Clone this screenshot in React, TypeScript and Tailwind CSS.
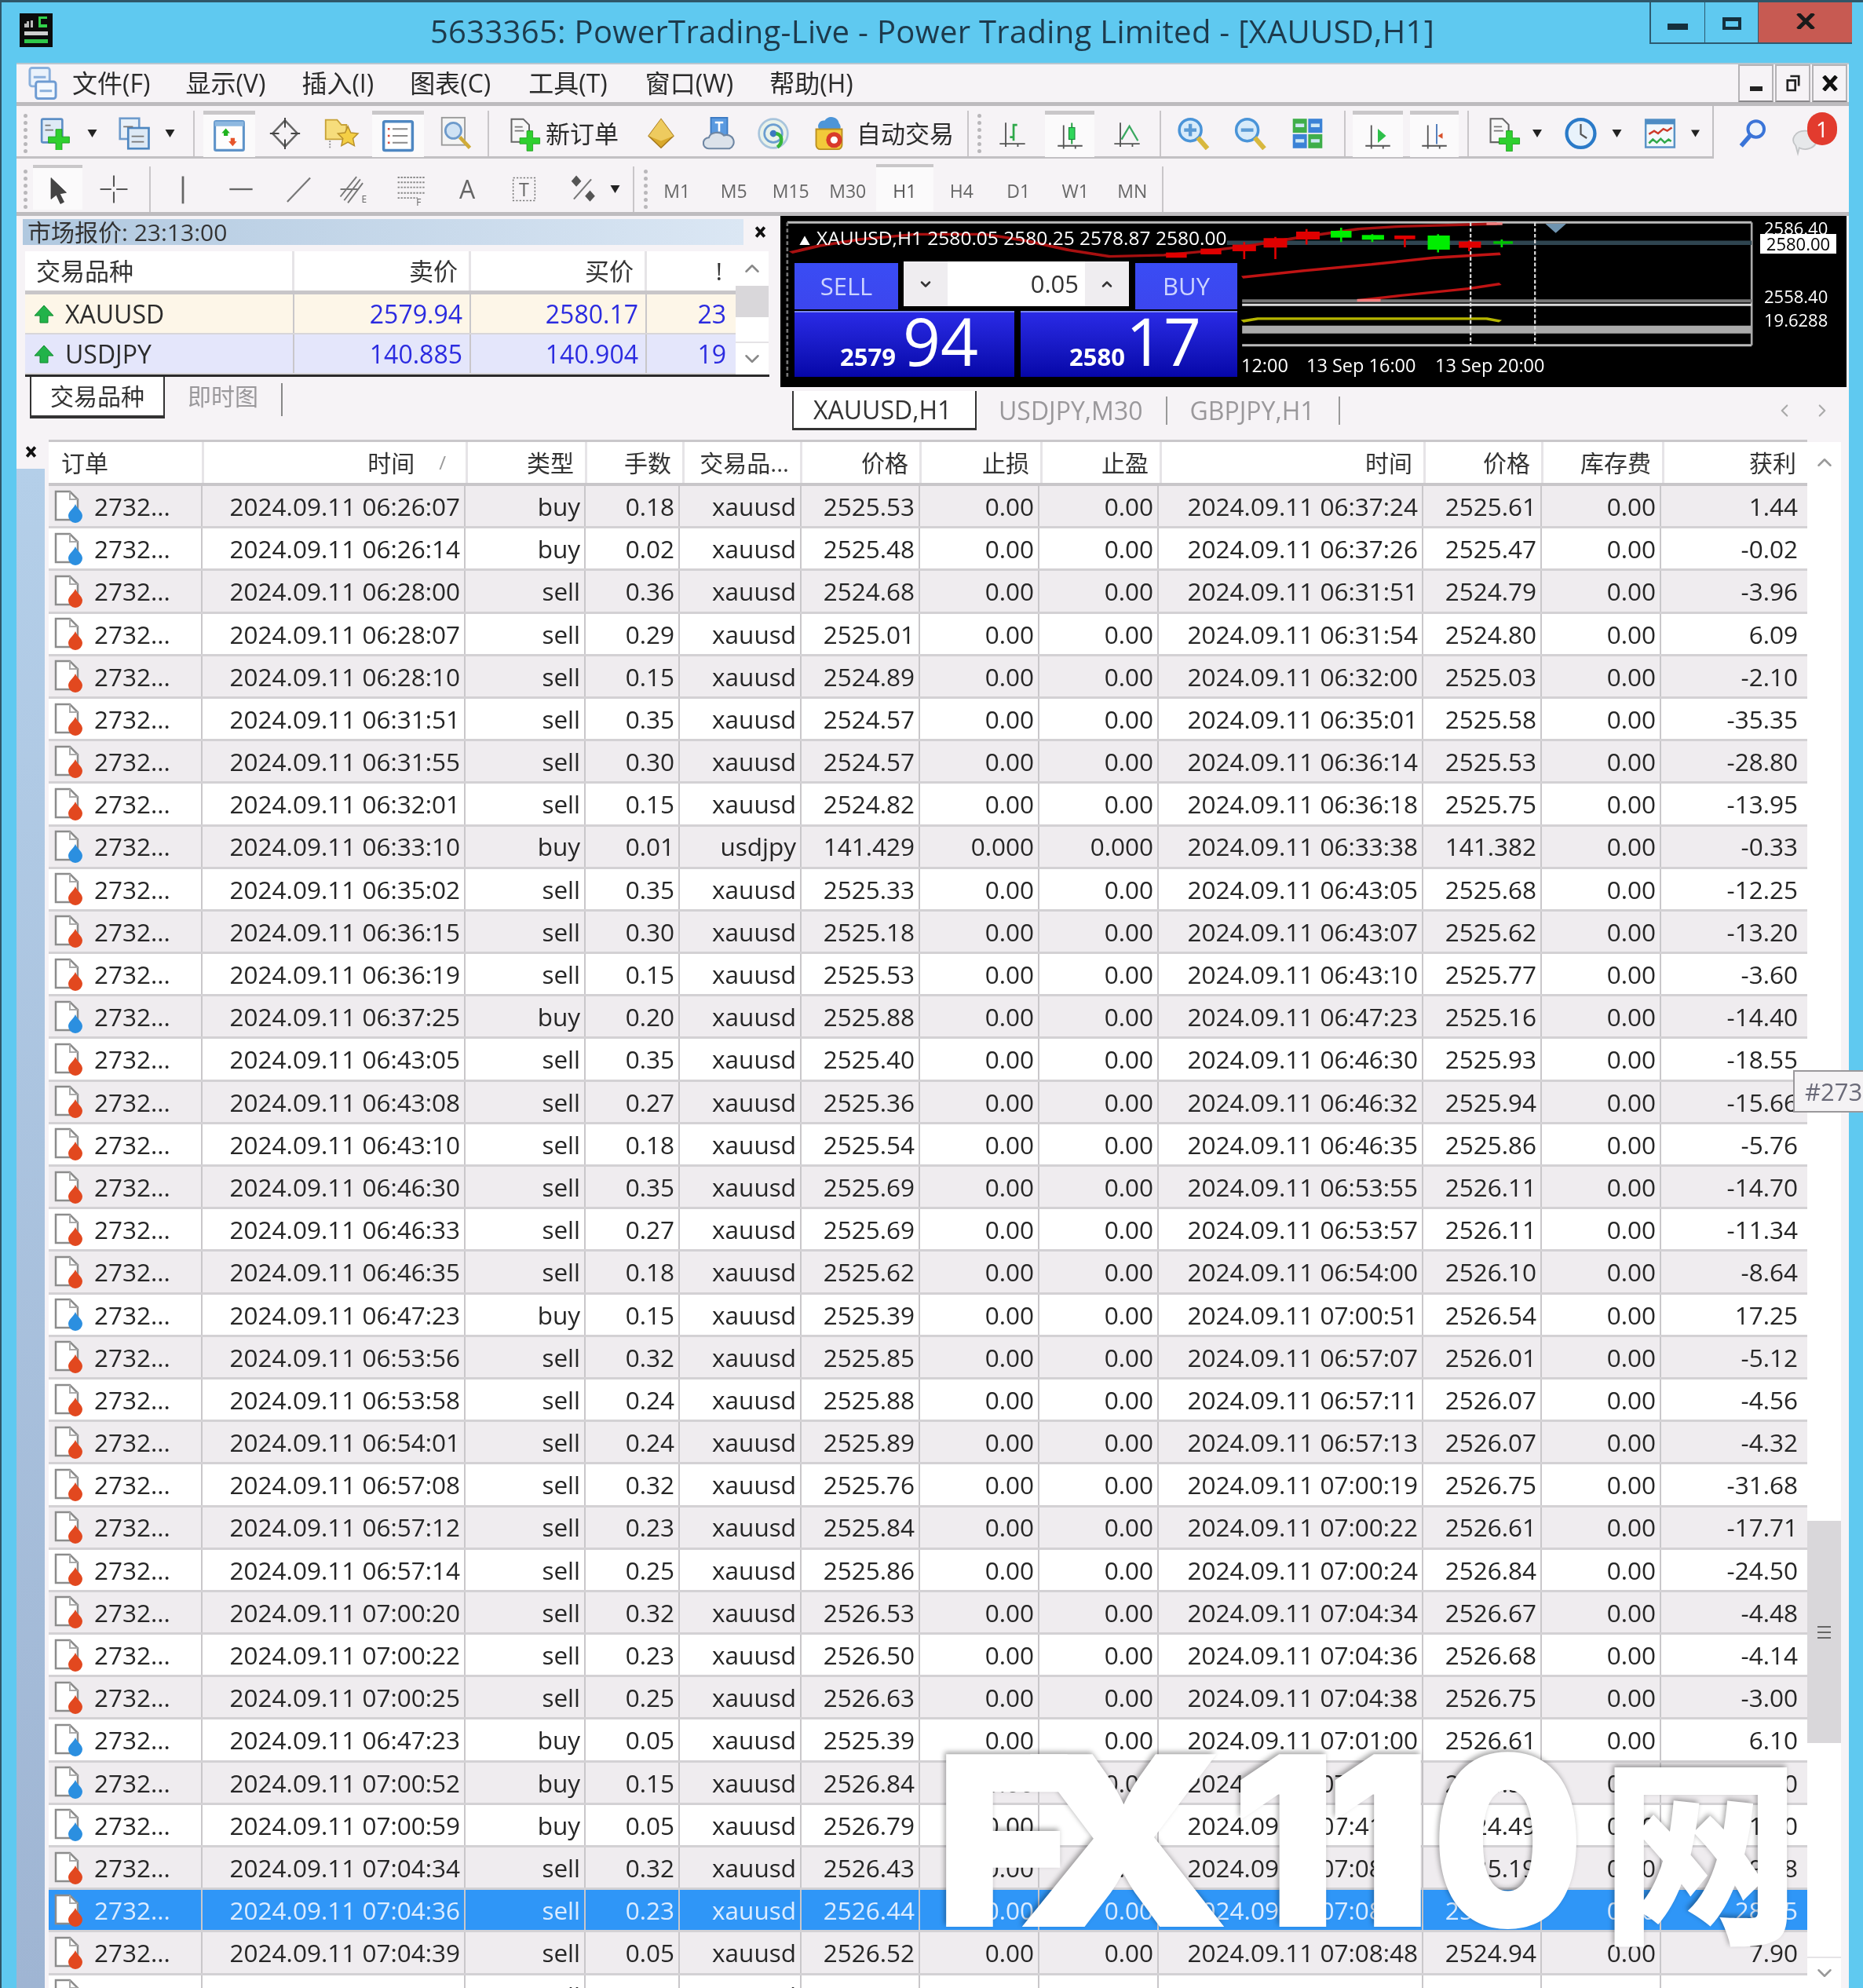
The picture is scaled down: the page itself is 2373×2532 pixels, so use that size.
import React from "react";
import { ChevronUp, ChevronDown, ChevronLeft, ChevronRight } from "lucide-react";

type P = { className?: string };
const Svg = ({ className, children }: P & { children: React.ReactNode }) => (
  <svg viewBox="0 0 48 48" className={"shrink-0 " + (className ?? "")}>{children}</svg>
);
const GreenPlus = ({ x = 26, y = 24, s = 7 }: { x?: number; y?: number; s?: number }) => (
  <path
    d={`M${x - s / 2} ${y}h${s}v${s * 1.2}h${s * 1.2}v${s}h${-s * 1.2}v${s * 1.2}h${-s}v${-s * 1.2}h${-s * 1.2}v${-s}h${s * 1.2}z`}
    fill="#2fd02f"
    stroke="#1a9a1a"
    strokeWidth="1"
  />
);
const Axes = () => (
  <g stroke="#555" strokeWidth="2.4" fill="none">
    <path d="M3 41H45M13 6V46M33 41v5" />
  </g>
);
const NewChart = (p: P) => (
  <Svg {...p}>
    <rect x="3" y="3" width="30" height="34" rx="2" fill="#dfeaf6" stroke="#5e8fc6" strokeWidth="3" />
    <path d="M8 12h8M8 19h12" stroke="#777" strokeWidth="2" />
    <GreenPlus x={28} y={18} s={9} />
  </Svg>
);
const Profiles = (p: P) => (
  <Svg {...p}>
    <rect x="2" y="2" width="28" height="30" fill="#e8f0f8" stroke="#6e9bcc" strokeWidth="3" />
    <rect x="14" y="16" width="30" height="30" fill="#dde9f5" stroke="#4d86c0" strokeWidth="3" />
    <path d="M7 14h14M19 28h18M19 36h18" stroke="#777" strokeWidth="2" />
  </Svg>
);
const Market = (p: P) => (
  <Svg {...p}>
    <rect x="3" y="3" width="42" height="42" rx="2" fill="#fdfdfd" stroke="#5e93c9" strokeWidth="3.5" />
    <rect x="3" y="3" width="42" height="7" fill="#8db8e0" />
    <path d="M19 13l6 7h-3v4h-6v-4h-3z" fill="#1fb31f" />
    <path d="M29 39l-6-7h3v-5h6v5h3z" fill="#e6552a" />
  </Svg>
);
const Crosshair = (p: P) => (
  <Svg {...p}>
    <path d="M24 4L43 24L24 44L5 24Z" fill="none" stroke="#666" strokeWidth="3" />
    <path d="M24 0V15M24 33V48M1 24H15M33 24H47" stroke="#444" strokeWidth="2.4" />
  </Svg>
);
const FolderStar = (p: P) => (
  <Svg {...p}>
    <path d="M3 5h16l6 7h7v20H3z" fill="#f6dd7c" stroke="#c7a238" strokeWidth="2" />
    <path d="M34 14l4 9 10 1-7 7 2 10-9-5-9 5 2-10-7-7 10-1z" fill="#f4cf45" stroke="#b8902a" strokeWidth="1.6" />
    <path d="M9 34v12" stroke="#888" strokeWidth="2" strokeDasharray="2 2" />
  </Svg>
);
const Navigator = (p: P) => (
  <Svg {...p}>
    <rect x="3" y="3" width="42" height="42" rx="2" fill="#fff" stroke="#4e87c2" strokeWidth="4" />
    <path d="M16 14h22M16 24h22M16 34h22" stroke="#8a8a8a" strokeWidth="2.4" />
    <path d="M9 14h3M9 24h3M9 34h3" stroke="#d84a3a" strokeWidth="3" />
  </Svg>
);
const Tester = (p: P) => (
  <Svg {...p}>
    <rect x="3" y="2" width="32" height="38" fill="#f4f4f4" stroke="#999" strokeWidth="2" />
    <circle cx="19" cy="20" r="11" fill="#cfe2f4" stroke="#6d9acb" strokeWidth="3" />
    <path d="M28 29l14 15" stroke="#d0ab38" strokeWidth="5" />
  </Svg>
);
const OrderDoc = (p: P) => (
  <Svg {...p}>
    <path d="M3 2h18l9 9v26H3z" fill="#f7f7f7" stroke="#666" strokeWidth="2.4" />
    <path d="M8 14h12M8 20h14" stroke="#777" strokeWidth="2" />
    <GreenPlus x={31} y={20} s={9} />
  </Svg>
);
const Gold = (p: P) => (
  <Svg {...p}>
    <path d="M24 1L44 28L24 47L4 28Z" fill="#d9a92c" stroke="#a87a1c" strokeWidth="2" />
    <path d="M24 1L4 28L24 36L44 28Z" fill="#eecb5f" />
  </Svg>
);
const CloudDoc = (p: P) => (
  <Svg {...p}>
    <rect x="12" y="1" width="24" height="28" fill="#5a9ae0" stroke="#3a78c0" strokeWidth="2" />
    <path d="M18 8h12M24 8v13" stroke="#fff" strokeWidth="3" />
    <path d="M9 46a8 8 0 0 1 0-16a12 9 0 0 1 22-3a9 9 0 0 1 8 19z" fill="#dbe2ea" stroke="#6e86a3" strokeWidth="2.4" />
  </Svg>
);
const Signal = (p: P) => (
  <Svg {...p}>
    <circle cx="24" cy="24" r="21" fill="#e9f2ea" stroke="#a8c4dc" strokeWidth="3" />
    <circle cx="24" cy="24" r="13" fill="none" stroke="#6b9ed0" strokeWidth="3" />
    <circle cx="24" cy="24" r="5" fill="#3c78c0" />
    <path d="M28 24C38 26 38 38 30 44" fill="none" stroke="#35b53a" strokeWidth="5" />
  </Svg>
);
const Auto = (p: P) => (
  <Svg {...p}>
    <path d="M10 18a8 8 0 0 1 8-12a11 11 0 0 1 20 4a7 7 0 0 1 0 10z" fill="#4d95d8" />
    <path d="M6 18h36v22a6 6 0 0 1-6 6H12a6 6 0 0 1-6-6z" fill="#f2c93a" stroke="#b98e20" strokeWidth="2" />
    <circle cx="31" cy="33" r="11" fill="#d93a2a" />
    <circle cx="31" cy="33" r="5" fill="#fff" />
  </Svg>
);
const Bars = (p: P) => (
  <Svg {...p}>
    <Axes />
    <path d="M26 8V36M26 10h6M20 30h6" stroke="#2fa84a" strokeWidth="3.5" fill="none" />
  </Svg>
);
const Candle = (p: P) => (
  <Svg {...p}>
    <Axes />
    <path d="M27 2V38" stroke="#1a9a3a" strokeWidth="2.5" />
    <rect x="22" y="10" width="10" height="20" fill="#2fd65a" stroke="#1a8a3a" strokeWidth="1.5" />
  </Svg>
);
const LineC = (p: P) => (
  <Svg {...p}>
    <Axes />
    <path d="M15 34L28 12L42 36" stroke="#3aa860" strokeWidth="3" fill="none" />
  </Svg>
);
const Zoom = ({ className, plus }: P & { plus?: boolean }) => (
  <Svg className={className}>
    <circle cx="19" cy="19" r="16" fill="#d7ebfa" stroke="#4a94d8" strokeWidth="4" />
    <path d="M10 19h18" stroke="#5b9bd5" strokeWidth="5" />
    {plus && <path d="M19 10v18" stroke="#5b9bd5" strokeWidth="5" />}
    <path d="M30 30l14 16" stroke="#d8b83e" strokeWidth="7" />
  </Svg>
);
const Tile = (p: P) => (
  <Svg {...p}>
    <rect x="2" y="2" width="21" height="21" fill="#3fae4a" />
    <rect x="25" y="2" width="21" height="21" fill="#3b82d6" />
    <rect x="2" y="25" width="21" height="21" fill="#3b82d6" />
    <rect x="25" y="25" width="21" height="21" fill="#3fae4a" />
    <path d="M6 12h13M29 12h13M6 35h13M29 35h13" stroke="#cfe8f5" strokeWidth="5" />
  </Svg>
);
const ScrollC = (p: P) => (
  <Svg {...p}>
    <Axes />
    <path d="M24 12L38 24L24 36Z" fill="#2ec04a" />
  </Svg>
);
const ShiftC = (p: P) => (
  <Svg {...p}>
    <Axes />
    <path d="M28 4V38" stroke="#4a78b8" strokeWidth="2.5" />
    <path d="M30 24l8-5v10z" fill="#d8502a" />
  </Svg>
);
const Clock = (p: P) => (
  <Svg {...p}>
    <circle cx="24" cy="24" r="21" fill="#e8f2fb" stroke="#2a7ac8" strokeWidth="5" />
    <path d="M24 10V25L33 31" stroke="#555" strokeWidth="2.6" fill="none" />
  </Svg>
);
const ChartWin = (p: P) => (
  <Svg {...p}>
    <rect x="2" y="3" width="44" height="42" fill="#f3f8fc" stroke="#5a93c6" strokeWidth="3" />
    <rect x="2" y="3" width="44" height="7" fill="#4d8cc4" />
    <path d="M7 25l8-5 6 4 8-7 6 3 7-5" stroke="#cc3a2a" strokeWidth="3" fill="none" />
    <path d="M7 39l6-6 6 5 6-6 6 6 6-5 4 3" stroke="#2fa84a" strokeWidth="3" fill="none" />
  </Svg>
);
const Search = (p: P) => (
  <Svg {...p}>
    <circle cx="30" cy="17" r="13" fill="#eef4fb" stroke="#3a74d8" strokeWidth="5" />
    <path d="M20 28L6 44" stroke="#3a74d8" strokeWidth="7" />
  </Svg>
);
const Arrow = (p: P) => (
  <Svg {...p}>
    <path d="M12 2V38L21 31L28 46L34 43L27 29L38 27Z" fill="#444" stroke="#333" strokeWidth="1" />
  </Svg>
);
const Cross = (p: P) => (
  <Svg {...p}>
    <path d="M24 2V20M24 28V46M2 24H20M28 24H46" stroke="#555" strokeWidth="2.6" />
  </Svg>
);
const VLine = (p: P) => (
  <Svg {...p}>
    <path d="M24 6V44" stroke="#666" strokeWidth="3" />
  </Svg>
);
const HLine = (p: P) => (
  <Svg {...p}>
    <path d="M2 24H46" stroke="#666" strokeWidth="3.5" />
  </Svg>
);
const Trend = (p: P) => (
  <Svg {...p}>
    <path d="M4 46L44 4" stroke="#777" strokeWidth="3" />
  </Svg>
);
const FibChan = (p: P) => (
  <Svg {...p}>
    <path d="M2 36L28 4M8 42L34 8M14 46L38 14M2 24L30 24" stroke="#777" strokeWidth="2.4" />
    <text x="36" y="46" fontSize="15" fill="#666" fontFamily="Open Sans">E</text>
  </Svg>
);
const FibLines = (p: P) => (
  <Svg {...p}>
    <path d="M2 5H46M2 13H46M2 21H46M2 30H46M2 38H34" stroke="#888" strokeWidth="2.4" strokeDasharray="3 2" />
    <text x="32" y="50" fontSize="15" fill="#666" fontFamily="Open Sans">F</text>
  </Svg>
);
const TBox = (p: P) => (
  <Svg {...p}>
    <rect x="5" y="4" width="38" height="40" fill="none" stroke="#777" strokeWidth="2" strokeDasharray="3 3" />
    <text x="24" y="36" textAnchor="middle" fontSize="32" fill="#666" fontFamily="Open Sans">T</text>
  </Svg>
);
const Shapes = (p: P) => (
  <Svg {...p}>
    <path d="M14 2l8 9-8 9-8-9zM36 26l8 9-8 9-8-9z" fill="#555" />
    <path d="M10 40L38 8" stroke="#777" strokeWidth="2.6" />
  </Svg>
);
const Dd = ({ className }: P) => (
  <svg viewBox="0 0 12 10" className={"h-[10px] shrink-0 " + (className ?? "")}>
    <path d="M0 0H12L6 10Z" fill="#222" />
  </svg>
);
const Sep = ({ className }: P) => <div className={"w-[2px] h-[58px] shrink-0 bg-[#c9c6c9] " + (className ?? "")} />;
const Grip = ({ className }: P) => (
  <div className={"w-[5px] h-[50px] shrink-0 border-l-[5px] border-dotted border-[#b9b7ba] " + (className ?? "")} />
);
const Active = ({ className, children }: P & { children: React.ReactNode }) => (
  <div className={"h-[59px] shrink-0 flex items-center justify-center bg-[#fbfafb] border-t-[5px] border-[#c9c7c9] " + (className ?? "")}>
    {children}
  </div>
);

const TitleBar = () => (
  <div className="relative h-[77px] shrink-0 flex items-start justify-center pt-[12px]">
    <svg viewBox="0 0 42 43" className="absolute left-[23px] top-[14px] w-[42px] h-[43px]">
      <rect width="42" height="43" fill="#0b0b0b" />
      <path d="M6 18V13h3v-3h3v8zM14 18V9h3v9z" fill="#bbb" />
      <path d="M24 4h11v3h-8v7h8v4H24z" fill="#32d24a" />
      <rect x="6" y="23" width="30" height="5" fill="#cfcfcf" />
      <rect x="6" y="33" width="30" height="5" fill="#2fc84a" />
    </svg>
    <span className="text-[40px] leading-[50px] text-[#1d3a4c] tracking-[0.3px]">
      5633365: PowerTrading-Live - Power Trading Limited - [XAUUSD,H1]
    </span>
    <div className="absolute right-[14px] top-0 flex h-[53px] border-b-[2px] border-[#2d5a70]">
      <div className="w-[71px] border-l-[2px] border-r-[1px] border-[#2d5a70] flex items-start justify-center pt-[27px]">
        <div className="w-[26px] h-[8px] bg-[#15303d]" />
      </div>
      <div className="w-[68px] border-r-[1px] border-[#2d5a70] flex items-start justify-center pt-[19px]">
        <div className="w-[24px] h-[16px] border-[4px] border-t-[5px] border-[#15303d]" />
      </div>
      <div className="w-[119px] bg-[#c75a52] flex items-start justify-center pt-[14px]">
        <svg viewBox="0 0 24 20" className="w-[24px] h-[20px]">
          <path d="M2 0L22 20M22 0L2 20" stroke="#1a1a1a" strokeWidth="5" />
        </svg>
      </div>
    </div>
  </div>
);

const menus = [
  ["文件(F)", "ml-[19px]"],
  ["显示(V)", "ml-[45px]"],
  ["插入(I)", "ml-[46px]"],
  ["图表(C)", "ml-[46px]"],
  ["工具(T)", "ml-[48px]"],
  ["窗口(W)", "ml-[48px]"],
  ["帮助(H)", "ml-[46px]"],
];

const MdiBtn = ({ children }: { children: React.ReactNode }) => (
  <div className="w-[45px] h-[48px] border-[2px] border-[#b5b3b6] border-b-[#8a888b] flex items-center justify-center text-[#222]">
    {children}
  </div>
);

const MenuBar = () => (
  <div className="relative h-[55px] shrink-0 border-t-[2px] border-b-[5px] border-t-[#b9c6cf] border-b-[#bdbbbe] flex items-center pl-[13px]">
    <svg viewBox="0 0 40 44" className="w-[39px] h-[44px] shrink-0">
      <rect x="4" y="2" width="26" height="24" rx="3" fill="#eaf2fb" stroke="#8ab0dc" strokeWidth="3" />
      <rect x="12" y="20" width="26" height="22" rx="3" fill="#f4f8fd" stroke="#6e9bd2" strokeWidth="3" />
      <path d="M9 14h16M17 32h16" stroke="#8ab0dc" strokeWidth="3" />
    </svg>
    {menus.map(([t, c]) => (
      <span key={t} className={"text-[32px] leading-[40px] text-[#2b2b2b] " + c}>
        {t}
      </span>
    ))}
    <div className="absolute right-[2px] top-0 flex gap-[2px]">
      <MdiBtn>
        <div className="w-[16px] h-[6px] bg-[#222] mt-[14px]" />
      </MdiBtn>
      <MdiBtn>
        <svg viewBox="0 0 20 24" className="w-[18px] h-[24px]">
          <path d="M6 2H18V16M2 8H13V22H2Z" fill="none" stroke="#222" strokeWidth="3" />
        </svg>
      </MdiBtn>
      <MdiBtn>
        <svg viewBox="0 0 20 20" className="w-[20px] h-[20px]">
          <path d="M2 1L18 19M18 1L2 19" stroke="#111" strokeWidth="5" />
        </svg>
      </MdiBtn>
    </div>
  </div>
);

const Toolbar1 = () => (
  <div className="h-[69px] shrink-0 flex items-start">
    <div className="w-[2162px] h-[67px] shrink-0 pt-[6px] flex items-center border-b-[3px] border-r-[2px] border-[#c2c0c3]">
      <Grip className="ml-[9px]" />
      <NewChart className="ml-[12px] w-[49px] h-[42px]" />
      <Dd className="ml-[15px] w-[13px]" />
      <Profiles className="ml-[25px] w-[46px] h-[42px]" />
      <Dd className="ml-[15px] w-[13px]" />
      <Sep className="ml-[23px]" />
      <Active className="ml-[11px] w-[66px]">
        <Market className="w-[42px] h-[42px]" />
      </Active>
      <Crosshair className="ml-[18px] w-[40px] h-[42px]" />
      <FolderStar className="ml-[26px] w-[50px] h-[44px]" />
      <Active className="ml-[15px] w-[66px]">
        <Navigator className="w-[42px] h-[42px]" />
      </Active>
      <Tester className="ml-[19px] w-[46px] h-[44px]" />
      <Sep className="ml-[16px]" />
      <OrderDoc className="ml-[26px] w-[40px] h-[46px]" />
      <span className="ml-[6px] w-[95px] text-[31px] leading-[40px] text-[#2b2b2b] whitespace-nowrap">新订单</span>
      <Gold className="ml-[33px] w-[38px] h-[40px]" />
      <CloudDoc className="ml-[34px] w-[42px] h-[44px]" />
      <Signal className="ml-[27px] w-[42px] h-[44px]" />
      <Auto className="ml-[27px] w-[46px] h-[44px]" />
      <span className="ml-[12px] w-[121px] text-[31px] leading-[40px] text-[#2b2b2b] whitespace-nowrap">自动交易</span>
      <Sep className="ml-[20px]" />
      <Grip className="ml-[11px]" />
      <Bars className="ml-[21px] w-[37px] h-[42px]" />
      <Active className="ml-[23px] w-[63px]">
        <Candle className="w-[36px] h-[44px]" />
      </Active>
      <LineC className="ml-[23px] w-[37px] h-[42px]" />
      <Sep className="ml-[23px]" />
      <Zoom plus className="ml-[20px] w-[43px] h-[42px]" />
      <Zoom className="ml-[30px] w-[42px] h-[42px]" />
      <Tile className="ml-[31px] w-[41px] h-[42px]" />
      <Sep className="ml-[26px]" />
      <Active className="ml-[9px] w-[64px]">
        <ScrollC className="w-[36px] h-[42px]" />
      </Active>
      <Active className="ml-[9px] w-[62px]">
        <ShiftC className="w-[36px] h-[42px]" />
      </Active>
      <Sep className="ml-[11px]" />
      <OrderDoc className="ml-[25px] w-[41px] h-[46px]" />
      <Dd className="ml-[15px] w-[12px]" />
      <Clock className="ml-[29px] w-[41px] h-[42px]" />
      <Dd className="ml-[19px] w-[13px]" />
      <ChartWin className="ml-[28px] w-[41px] h-[40px]" />
      <Dd className="ml-[19px] w-[11px]" />
    </div>
    <Search className="ml-[30px] mt-[15px] w-[38px] h-[40px]" />
    <div className="relative ml-[30px] mt-[8px] w-[59px] h-[56px] shrink-0">
      <svg viewBox="0 0 40 40" className="absolute left-0 bottom-0 w-[36px] h-[36px]">
        <path d="M20 4a16 13 0 1 1-8 24l-2 8-3-11A16 13 0 0 1 20 4z" fill="#e6e8ea" stroke="#c2c4c6" strokeWidth="2" />
      </svg>
      <div className="absolute right-0 top-0 w-[38px] h-[42px] rounded-full bg-[#e23b2e] text-white text-[28px] leading-[42px] text-center">1</div>
    </div>
  </div>
);

const frames = ["M1", "M5", "M15", "M30", "H1", "H4", "D1", "W1", "MN"];

const Toolbar2 = () => (
  <div className="h-[71px] shrink-0 pt-[8px] flex items-center border-b-[5px] border-[#bebcbf]">
    <Grip className="ml-[9px]" />
    <div className="ml-[7px] mt-[-5px] w-[63px] h-[57px] shrink-0 flex items-center justify-center bg-[#fbfafb] border-t-[4px] border-[#c9c7c9]">
      <Arrow className="w-[36px] h-[46px] mt-[5px]" />
    </div>
    <Cross className="ml-[21px] w-[38px] h-[42px]" />
    <Sep className="ml-[26px]" />
    <VLine className="ml-[19px] w-[44px] h-[44px]" />
    <HLine className="ml-[36px] w-[32px] h-[40px]" />
    <Trend className="ml-[40px] w-[35px] h-[44px]" />
    <FibChan className="ml-[34px] w-[38px] h-[48px]" />
    <FibLines className="ml-[35px] w-[38px] h-[46px]" />
    <span className="ml-[42px] w-[21px] text-[32px] leading-[40px] text-[#666]">A</span>
    <TBox className="ml-[44px] w-[35px] h-[44px]" />
    <Shapes className="ml-[38px] w-[38px] h-[44px]" />
    <Dd className="ml-[16px] w-[13px]" />
    <Sep className="ml-[16px]" />
    <Grip className="ml-[12px]" />
    <div className="ml-px mt-[-4px] flex h-[60px] shrink-0">
      {frames.map((f) =>
        f === "H1" ? (
          <div key={f} className="w-[72.5px] pt-[5px] flex items-center justify-center bg-[#fbfafb] border-t-[4px] border-[#c9c7c9] text-[23px] text-[#555]">
            {f}
          </div>
        ) : (
          <div key={f} className="w-[72.5px] pt-[8px] flex items-center justify-center text-[23px] text-[#666]">
            {f}
          </div>
        )
      )}
    </div>
    <Sep className="ml-[1px]" />
  </div>
);

const UpArrow = () => (
  <svg viewBox="0 0 26 24" className="w-[26px] h-[24px] shrink-0">
    <path d="M13 1L25 14H18V23H8V14H1Z" fill="#22b34a" stroke="#0f8a2c" strokeWidth="1" />
  </svg>
);

const quotes = [
  { s: "XAUUSD", b: "2579.94", a: "2580.17", d: "23", c: "bg-[#fdf6e8]" },
  { s: "USDJPY", b: "140.885", a: "140.904", d: "19", c: "bg-[#e4e6fb]" },
];

const MarketWatch = () => (
  <div className="w-[973px] h-[275px] shrink-0 pl-[8px] pt-[4px]">
    <div className="w-[951px] flex items-center">
      <div className="w-[918px] h-[33px] pl-[6px] flex items-center bg-gradient-to-r from-[#b0c8df] to-[#dbe7f4] text-[30px] text-[#333] whitespace-nowrap">
        市场报价: 23:13:00
      </div>
      <svg viewBox="0 0 20 20" className="ml-[14px] w-[15px] h-[15px]">
        <path d="M3 2L17 18M17 2L3 18" stroke="#111" strokeWidth="5" />
      </svg>
    </div>
    <div className="mt-[8px] ml-[3px] w-[948px] flex border-b-[3px] border-[#2a2a2a]">
      <div className="w-[905px]">
        <div className="h-[55px] flex bg-white border-b-[5px] border-[#c8c6c9] text-[31px] text-[#333]">
          <div className="w-[343px] pl-[14px] flex items-center border-r-[3px] border-[#e6e4e7]">交易品种</div>
          <div className="w-[225px] pr-[14px] flex items-center justify-end border-r-[3px] border-[#e6e4e7]">卖价</div>
          <div className="w-[224px] pr-[14px] flex items-center justify-end border-r-[3px] border-[#e6e4e7]">买价</div>
          <div className="w-[113px] pr-[17px] flex items-center justify-end">!</div>
        </div>
        {quotes.map((q) => (
          <div key={q.s} className={"h-[51px] flex border-b-[2px] border-[#d8d6d9] text-[32px] text-[#2b2be0] " + q.c}>
            <div className="w-[343px] pl-[11px] gap-[14px] flex items-center text-[#2b2b2b] border-r-[2px] border-[#c9c7ca]">
              <UpArrow />
              {q.s}
            </div>
            <div className="w-[225px] pr-[9px] flex items-center justify-end border-r-[2px] border-[#c9c7ca]">{q.b}</div>
            <div className="w-[224px] pr-[9px] flex items-center justify-end border-r-[2px] border-[#c9c7ca]">{q.a}</div>
            <div className="w-[113px] pr-[12px] flex items-center justify-end">{q.d}</div>
          </div>
        ))}
      </div>
      <div className="w-[42px] flex flex-col bg-white">
        <div className="h-[44px] flex items-center justify-center text-[#888]">
          <ChevronUp className="w-[30px] h-[30px]" />
        </div>
        <div className="h-[40px] bg-[#d9d7da]" />
        <div className="flex-1" />
        <div className="h-[42px] flex items-center justify-center text-[#888] border-t-[2px] border-[#e5e3e6]">
          <ChevronDown className="w-[30px] h-[30px]" />
        </div>
      </div>
    </div>
    <div className="ml-[9px] flex items-start">
      <div className="w-[172px] h-[53px] bg-white border-x-[2px] border-b-[4px] border-[#333] flex items-center justify-center text-[30px] text-[#333]">
        交易品种
      </div>
      <span className="ml-[29px] w-[91px] mt-[3px] text-[30px] leading-[44px] text-[#9a989b] whitespace-nowrap">即时图</span>
      <div className="ml-[28px] mt-[8px] w-[2px] h-[42px] bg-[#888]" />
    </div>
  </div>
);

const Chart = () => (
  <div className="relative w-[1358px] h-[218px] bg-black overflow-hidden">
    <svg viewBox="5 15 1540 655" preserveAspectRatio="none" className="w-[1358px] h-[218px]">
      <path d="M15 40H1408M1408 510H672" fill="none" stroke="#bbb" strokeWidth="9" />
      <path d="M1408 40V510" fill="none" stroke="#aaa" strokeWidth="3" />
      <path d="M15 40V640" stroke="#777" strokeWidth="3" strokeDasharray="14 10" />
      <path d="M672 340H1408" stroke="#777" strokeWidth="12" />
      <path d="M672 355H1408" stroke="#ddd" strokeWidth="9" />
      <path d="M672 450H1408" stroke="#aaa" strokeWidth="30" />
      <path d="M650 118H1408" stroke="#2f4550" strokeWidth="16" />
      <polyline fill="none" stroke="#a81010" strokeWidth="10" points="20,155 60,130 120,105 200,85 300,85 360,110 420,145 480,170 560,165 620,150 680,130 760,95 840,65 900,55 1040,45" />
      <polyline fill="none" stroke="#c01414" strokeWidth="10" points="672,250 760,225 860,200 950,175 1045,160" />
      <polyline fill="none" stroke="#c01414" strokeWidth="10" points="840,338 900,320 1000,293 1045,275" />
      <path d="M838 338H872" stroke="#f08080" strokeWidth="10" />
      <polyline fill="none" stroke="#b5b500" strokeWidth="10" points="672,418 695,408 1025,408 1045,418" />
      <path d="M1002 40V510M1095 40V510" stroke="#ddd" strokeWidth="2.5" strokeDasharray="14 8" />
      <path d="M1110 45H1140L1125 80Z" fill="#6f94b0" />
      <path d="M1025 45H1048" stroke="#f08080" strokeWidth="10" />
      <path d="M675 115V180M720 95V180M765 65V125M907 90V135M1000 110V150" stroke="#e00000" strokeWidth="3" />
      <path d="M815 60V115M860 85V115M955 85V155M1047 105V135" stroke="#00e000" strokeWidth="3" />
      <rect x="562" y="155" width="30" height="20" fill="#e00000" />
      <rect x="612" y="140" width="30" height="22" fill="#e00000" />
      <rect x="658" y="125" width="34" height="25" fill="#e00000" />
      <rect x="703" y="100" width="34" height="36" fill="#e00000" />
      <rect x="750" y="75" width="34" height="30" fill="#e00000" />
      <rect x="800" y="72" width="30" height="26" fill="#00ee00" />
      <rect x="845" y="88" width="32" height="18" fill="#00ee00" />
      <rect x="892" y="90" width="30" height="14" fill="#e00000" />
      <rect x="940" y="90" width="32" height="54" fill="#00ee00" />
      <rect x="985" y="113" width="32" height="24" fill="#e00000" />
      <rect x="1035" y="112" width="28" height="10" fill="#00c000" />
    </svg>
    <div className="absolute left-[24px] top-[13px] text-[24.5px] leading-[30px] text-white whitespace-nowrap">
      <span className="text-[14px] mr-[8px]">▲</span>XAUUSD,H1 2580.05 2580.25 2578.87 2580.00
    </div>
    <div className="absolute left-[18px] top-[58px] w-[564px]">
      <div className="flex items-start">
        <div className="mt-[2px] w-[132px] h-[59px] flex items-center justify-center bg-gradient-to-b from-[#3a4cf4] to-[#3c46ee] text-[31px] text-[#cdd4ff]">SELL</div>
        <div className="ml-[7px] w-[287px] h-[57px] flex bg-white">
          <div className="w-[56px] bg-[#efedf0] flex items-center justify-center">
            <ChevronDown className="w-[20px] h-[20px] text-[#333]" strokeWidth={3} />
          </div>
          <div className="flex-1 flex items-center justify-end pr-[8px] text-[31px] text-[#333]">0.05</div>
          <div className="w-[56px] bg-[#efedf0] flex items-center justify-center">
            <ChevronUp className="w-[20px] h-[20px] text-[#333]" strokeWidth={3} />
          </div>
        </div>
        <div className="ml-[8px] mt-[2px] w-[130px] h-[59px] flex items-center justify-center bg-gradient-to-b from-[#3a4cf4] to-[#3c46ee] text-[31px] text-[#cdd4ff]">BUY</div>
      </div>
      <div className="mt-[2px] flex gap-[8px]">
        <div className="w-[280px] h-[84px] flex items-baseline justify-end gap-[9px] pr-[46px] bg-gradient-to-b from-[#2a2ae6] to-[#0606a8] border-t-[2px] border-[#7a86f0] text-white">
          <span className="text-[31px] font-bold leading-[72px]">2579</span>
          <span className="text-[84px] leading-[72px]">94</span>
        </div>
        <div className="w-[276px] h-[84px] flex items-baseline justify-end gap-[1px] pr-[46px] bg-gradient-to-b from-[#2a2ae6] to-[#0606a8] border-t-[2px] border-[#7a86f0] text-white">
          <span className="text-[31px] font-bold leading-[72px]">2580</span>
          <span className="text-[84px] leading-[72px]">17</span>
        </div>
      </div>
    </div>
    <span className="absolute left-[1253px] top-[2px] text-[22px] leading-[26px] text-white">2586.40</span>
    <span className="absolute left-[1248px] top-[23px] w-[97px] h-[25px] bg-white text-black text-center text-[22px] leading-[25px]">2580.00</span>
    <span className="absolute left-[1253px] top-[89px] text-[22px] leading-[26px] text-white">2558.40</span>
    <span className="absolute left-[1253px] top-[119px] text-[22px] leading-[26px] text-white">19.6288</span>
    <span className="absolute left-[587px] top-[177px] text-[23.5px] leading-[26px] text-white">12:00</span>
    <span className="absolute left-[670px] top-[177px] text-[23.5px] leading-[26px] text-white">13 Sep 16:00</span>
    <span className="absolute left-[834px] top-[177px] text-[23.5px] leading-[26px] text-white">13 Sep 20:00</span>
  </div>
);

const ChartPane = () => (
  <div className="w-[1358px] h-[275px] shrink-0">
    <Chart />
    <div className="mt-[5px] h-[50px] flex items-center text-[32px] text-[#9a989b]">
      <div className="ml-[15px] w-[235px] h-[50px] pl-[25px] flex items-center bg-white border-x-[2px] border-b-[3px] border-[#333] text-[#333]">
        XAUUSD,H1
      </div>
      <span className="ml-[28px]">USDJPY,M30</span>
      <div className="ml-[30px] w-[2px] h-[36px] bg-[#999]" />
      <span className="ml-[28px]">GBPJPY,H1</span>
      <div className="ml-[30px] w-[2px] h-[36px] bg-[#999]" />
      <ChevronLeft className="ml-[553px] w-[26px] h-[26px] text-[#aaa]" />
      <ChevronRight className="ml-[22px] w-[26px] h-[26px] text-[#aaa]" />
    </div>
  </div>
);

const hw = ["w-[198px]", "w-[336px]", "w-[152px]", "w-[124px]", "w-[150px]", "w-[152px]", "w-[154px]", "w-[152px]", "w-[336px]", "w-[150px]", "w-[154px]", "w-[182px]"];
const cw = ["w-[196px]", "w-[335px]", "w-[153px]", "w-[120px]", "w-[155px]", "w-[151px]", "w-[152px]", "w-[152px]", "w-[337px]", "w-[151px]", "w-[152px]", "w-[186px]"];
const heads = ["订单", "时间", "类型", "手数", "交易品...", "价格", "止损", "止盈", "时间", "价格", "库存费", "获利"];

type R = [string, string, string, string, string, string, string];
const rows: R[] = [
  ["buy", "0.18", "06:26:07", "2525.53", "06:37:24", "2525.61", "1.44"],
  ["buy", "0.02", "06:26:14", "2525.48", "06:37:26", "2525.47", "-0.02"],
  ["sell", "0.36", "06:28:00", "2524.68", "06:31:51", "2524.79", "-3.96"],
  ["sell", "0.29", "06:28:07", "2525.01", "06:31:54", "2524.80", "6.09"],
  ["sell", "0.15", "06:28:10", "2524.89", "06:32:00", "2525.03", "-2.10"],
  ["sell", "0.35", "06:31:51", "2524.57", "06:35:01", "2525.58", "-35.35"],
  ["sell", "0.30", "06:31:55", "2524.57", "06:36:14", "2525.53", "-28.80"],
  ["sell", "0.15", "06:32:01", "2524.82", "06:36:18", "2525.75", "-13.95"],
  ["buy", "0.01", "06:33:10", "141.429", "06:33:38", "141.382", "-0.33"],
  ["sell", "0.35", "06:35:02", "2525.33", "06:43:05", "2525.68", "-12.25"],
  ["sell", "0.30", "06:36:15", "2525.18", "06:43:07", "2525.62", "-13.20"],
  ["sell", "0.15", "06:36:19", "2525.53", "06:43:10", "2525.77", "-3.60"],
  ["buy", "0.20", "06:37:25", "2525.88", "06:47:23", "2525.16", "-14.40"],
  ["sell", "0.35", "06:43:05", "2525.40", "06:46:30", "2525.93", "-18.55"],
  ["sell", "0.27", "06:43:08", "2525.36", "06:46:32", "2525.94", "-15.66"],
  ["sell", "0.18", "06:43:10", "2525.54", "06:46:35", "2525.86", "-5.76"],
  ["sell", "0.35", "06:46:30", "2525.69", "06:53:55", "2526.11", "-14.70"],
  ["sell", "0.27", "06:46:33", "2525.69", "06:53:57", "2526.11", "-11.34"],
  ["sell", "0.18", "06:46:35", "2525.62", "06:54:00", "2526.10", "-8.64"],
  ["buy", "0.15", "06:47:23", "2525.39", "07:00:51", "2526.54", "17.25"],
  ["sell", "0.32", "06:53:56", "2525.85", "06:57:07", "2526.01", "-5.12"],
  ["sell", "0.24", "06:53:58", "2525.88", "06:57:11", "2526.07", "-4.56"],
  ["sell", "0.24", "06:54:01", "2525.89", "06:57:13", "2526.07", "-4.32"],
  ["sell", "0.32", "06:57:08", "2525.76", "07:00:19", "2526.75", "-31.68"],
  ["sell", "0.23", "06:57:12", "2525.84", "07:00:22", "2526.61", "-17.71"],
  ["sell", "0.25", "06:57:14", "2525.86", "07:00:24", "2526.84", "-24.50"],
  ["sell", "0.32", "07:00:20", "2526.53", "07:04:34", "2526.67", "-4.48"],
  ["sell", "0.23", "07:00:22", "2526.50", "07:04:36", "2526.68", "-4.14"],
  ["sell", "0.25", "07:00:25", "2526.63", "07:04:38", "2526.75", "-3.00"],
  ["buy", "0.05", "06:47:23", "2525.39", "07:01:00", "2526.61", "6.10"],
  ["buy", "0.15", "07:00:52", "2526.84", "07:41:03", "2524.54", "-34.50"],
  ["buy", "0.05", "07:00:59", "2526.79", "07:41:05", "2524.49", "-11.50"],
  ["sell", "0.32", "07:04:34", "2526.43", "07:08:44", "2525.19", "39.68"],
  ["sell", "0.23", "07:04:36", "2526.44", "07:08:46", "2525.19", "28.75"],
  ["sell", "0.05", "07:04:39", "2526.52", "07:08:48", "2524.94", "7.90"],
  ["sell", "0.05", "07:04:41", "2526.50", "07:08:50", "2524.90", "8.00"],
];

const Doc = ({ buy }: { buy: boolean }) => (
  <svg viewBox="0 0 38 42" className="w-[38px] h-[42px] shrink-0">
    <path d="M2 2H20L30 12V38H2Z" fill="#fff" stroke="#8c8c8c" strokeWidth="2.5" />
    <path d="M20 2V12H30" fill="none" stroke="#aaa" strokeWidth="2" />
    <path d="M27 18C29 24 36 27 36 33A9 9 0 0 1 18 33C18 27 25 24 27 18Z" fill={buy ? "#2b8fe0" : "#e2481f"} />
  </svg>
);

const Row = ({ r, i }: { r: R; i: number }) => {
  const sel = i === 33;
  const jpy = r[3].startsWith("141");
  const z = jpy ? "0.000" : "0.00";
  const vals = ["2732...", "2024.09.11 " + r[2], r[0], r[1], jpy ? "usdjpy" : "xauusd", r[3], z, z, "2024.09.11 " + r[4], r[5], "0.00", r[6]];
  const bg = sel ? "bg-[#2f96f7] text-[#dcecff]" : i % 2 === 0 ? "bg-[#efecef] text-[#262626]" : "bg-white text-[#262626]";
  return (
    <div className={"h-[54.2px] shrink-0 flex border-b-[3px] border-[#d3d1d4] text-[31.5px] " + bg}>
      {vals.map((v, c) =>
        c === 0 ? (
          <div key={c} className={cw[c] + " shrink-0 pl-[7px] flex items-center gap-[13px] border-r-[2px] border-[#c9c7ca]"}>
            <Doc buy={r[0] === "buy"} />
            {v}
          </div>
        ) : c === 11 ? (
          <div key={c} className={cw[c] + " shrink-0 pr-[12px] flex items-center justify-end whitespace-nowrap"}>
            {v}
          </div>
        ) : (
          <div key={c} className={cw[c] + " shrink-0 pr-[5px] flex items-center justify-end whitespace-nowrap border-r-[2px] border-[#c9c7ca]"}>
            {v}
          </div>
        )
      )}
    </div>
  );
};

const Terminal = () => (
  <div className="flex h-[1982px] overflow-hidden">
    <div className="w-[36px] shrink-0 flex flex-col">
      <div className="h-[47px] shrink-0 flex items-center justify-center pt-[3px]">
        <svg viewBox="0 0 20 20" className="w-[15px] h-[15px]">
          <path d="M3 2L17 18M17 2L3 18" stroke="#111" strokeWidth="5" />
        </svg>
      </div>
      <div className="flex-1 bg-gradient-to-b from-[#b4cfe9] to-[#9fb5d3]" />
    </div>
    <div className="w-[5px] shrink-0" />
    <div className="w-[2240px] shrink-0 mt-[10px] border-t-[3px] border-[#c9c7ca]">
      <div className="h-[56px] flex bg-white border-b-[4px] border-[#c8c6c9] text-[30px] text-[#333]">
        {heads.map((h, c) =>
          c === 0 ? (
            <div key={c} className={hw[c] + " shrink-0 pl-[16px] flex items-center border-r-[3px] border-[#e6e4e7]"}>{h}</div>
          ) : c === 1 ? (
            <div key={c} className={hw[c] + " shrink-0 pr-[25px] gap-[31px] flex items-center justify-end border-r-[3px] border-[#e6e4e7]"}>
              {h}
              <span className="text-[24px] text-[#999]">/</span>
            </div>
          ) : (
            <div key={c} className={hw[c] + " shrink-0 pr-[14px] flex items-center justify-end whitespace-nowrap " + (c < 11 ? "border-r-[3px] border-[#e6e4e7]" : "")}>{h}</div>
          )
        )}
      </div>
      {rows.map((r, i) => (
        <Row key={i} r={r} i={i} />
      ))}
    </div>
    <div className="w-[43px] shrink-0 mt-[13px] h-[1969px] flex flex-col bg-white">
      <div className="h-[52px] shrink-0 flex items-center justify-center text-[#999]">
        <ChevronUp className="w-[30px] h-[30px]" />
      </div>
      <div className="h-[1322px] shrink-0" />
      <div className="h-[283px] shrink-0 bg-[#d9d7da] flex items-center justify-center">
        <div className="w-[17px] h-[16px] border-y-[2px] border-[#666] flex items-center">
          <div className="w-full h-[2px] bg-[#666]" />
        </div>
      </div>
      <div className="flex-1" />
      <div className="h-[40px] shrink-0 flex items-center justify-center text-[#999] border-t-[2px] border-[#e5e3e6]">
        <ChevronDown className="w-[30px] h-[30px]" />
      </div>
    </div>
  </div>
);

export default function App() {
  return (
    <div className="relative w-[2373px] h-[2532px] overflow-hidden bg-[#5fc9f0] border-t-[3px] border-l-[2px] border-[#2f5668] font-['Open_Sans','Noto_Sans_CJK_SC',sans-serif] blur-[0.7px]">
      <TitleBar />
      <div className="ml-[19px] w-[2334px] h-[2452px] bg-[#f6f3f6] flex flex-col">
        <MenuBar />
        <Toolbar1 />
        <Toolbar2 />
        <div className="flex h-[275px] shrink-0">
          <MarketWatch />
          <ChartPane />
        </div>
        <Terminal />
      </div>
      <div className="absolute left-[2282px] top-[1360px] w-[100px] h-[54px] bg-[#f4f2f4] border-[2px] border-[#9a989b] text-[31px] leading-[50px] pl-[13px] text-[#6a6a78] whitespace-nowrap">
        #273
      </div>
      <div className="absolute left-[1189px] top-[2190px] flex items-start text-white font-black text-[302px] leading-[302px] font-['Inter','Liberation_Sans',sans-serif] drop-shadow-[-2px_-3px_3px_rgba(0,0,0,0.35)]">
        <span>F</span>
        <span className="ml-[-73px] scale-x-[1.15] origin-left">X</span>
        <span className="ml-[35px]">1</span>
        <span className="ml-[-16px]">1</span>
        <span className="scale-x-90 origin-left">0</span>
        <span className="text-[255px] font-['Noto_Sans_CJK_SC',sans-serif]">网</span>
      </div>
    </div>
  );
}
